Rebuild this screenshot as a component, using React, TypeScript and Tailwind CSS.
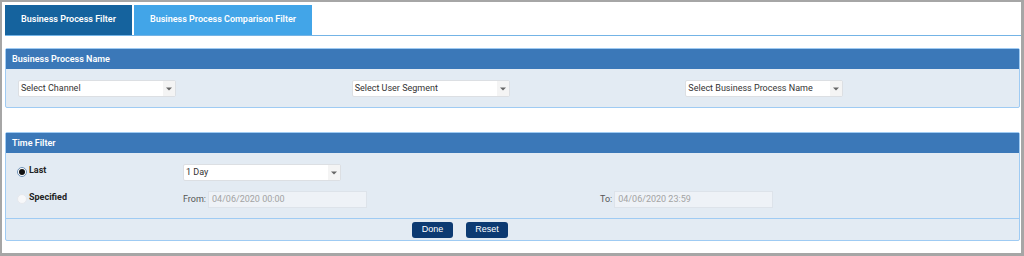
import React from "react";

const font = { fontFamily: "Roboto, 'Liberation Sans', sans-serif" };

function Select({ label, w = "w-[158px]" }: { label: string; w?: string }) {
  return (
    <div className={`${w} h-[17px] flex bg-white border border-[#dcdfe3] rounded-[2px]`}>
      <div className="flex-1 flex items-center pl-[2px] text-[9px] text-[#333] leading-none">{label}</div>
      <div className="w-[12px] bg-[#f4f4f4] flex items-center justify-center">
        <svg width="6" height="4" viewBox="0 0 6 4">
          <path d="M0 0.5 L6 0.5 L3 3.5 Z" fill="#666" />
        </svg>
      </div>
    </div>
  );
}

function DateInput({ value }: { value: string }) {
  return (
    <div className="w-[159px] h-[17px] flex items-center pl-[3px] bg-[#eef2f7] border border-[#dde3ea] text-[9px] text-[#a3a3a3] leading-none">
      {value}
    </div>
  );
}

function Header({ title }: { title: string }) {
  return (
    <div className="h-[20px] bg-[#3b78b8] flex items-center pl-[6px] text-white text-[9px] font-semibold leading-none">
      {title}
    </div>
  );
}

export default function App() {
  return (
    <div
      className="w-[1024px] h-[256px] bg-white border-l-2 border-t-2 border-r-[3px] border-b-[3px] border-[#a6a6a6] pt-[3px] pl-[3px] box-border"
      style={font}
    >
      <div className="flex gap-[2px] h-[31px] border-b border-[#74b4e6]">
        <div className="w-[127px] h-[30px] bg-[#15639e] flex items-center justify-center text-white text-[9px] font-semibold">
          Business Process Filter
        </div>
        <div className="w-[178px] h-[30px] bg-[#42a5e8] flex items-center justify-center text-white text-[9px] font-semibold">
          Business Process Comparison Filter
        </div>
      </div>

      <div className="mt-[12px] mr-[1px] border border-[#9fcbf3] rounded-[2px] bg-[#e3ebf3]">
        <Header title="Business Process Name" />
        <div className="grid grid-cols-3 pl-[12px] pt-[11px] pb-[10px]">
          <Select label="Select Channel" />
          <Select label="Select User Segment" />
          <Select label="Select Business Process Name" />
        </div>
      </div>

      <div className="mt-[24px] mr-[1px] border border-[#9fcbf3] rounded-[2px] bg-[#e3ebf3]">
        <Header title="Time Filter" />
        <div className="grid grid-cols-[166px_417px_1fr] gap-y-[10px] pl-[11px] pt-[11px] pb-[10px] border-b border-[#9fcbf3]">
          <div className="flex items-start gap-[2px] pt-[2px]">
            <div className="w-[10px] h-[10px] rounded-full border border-[#6f93b8] bg-white flex items-center justify-center mt-[1px]">
              <div className="w-[6px] h-[6px] rounded-full bg-[#111]" />
            </div>
            <span className="text-[9px] font-bold text-[#222] leading-none">Last</span>
          </div>
          <Select label="1 Day" />
          <div />
          <div className="flex items-start gap-[2px] pt-[2px]">
            <div className="w-[10px] h-[10px] rounded-full border border-[#e6e9ee] bg-[#f7f8fa] mt-[1px]" />
            <span className="text-[9px] font-bold text-[#222] leading-none">Specified</span>
          </div>
          <div className="flex items-center gap-[2px]">
            <span className="text-[9px] text-[#555]">From:</span>
            <DateInput value="04/06/2020 00:00" />
          </div>
          <div className="flex items-center gap-[2px]">
            <span className="text-[9px] text-[#555]">To:</span>
            <DateInput value="04/06/2020 23:59" />
          </div>
        </div>
        <div className="h-[21px] flex items-center pl-[406px] gap-[13px]">
          <button className="w-[41px] h-[16px] rounded-[3px] bg-[#0c3a72] text-white text-[9px] leading-none" style={{ fontFamily: "'Liberation Sans', Arial, sans-serif" }}>
            Done
          </button>
          <button className="w-[42px] h-[16px] rounded-[3px] bg-[#0c3a72] text-white text-[9px] leading-none" style={{ fontFamily: "'Liberation Sans', Arial, sans-serif" }}>
            Reset
          </button>
        </div>
      </div>
    </div>
  );
}
